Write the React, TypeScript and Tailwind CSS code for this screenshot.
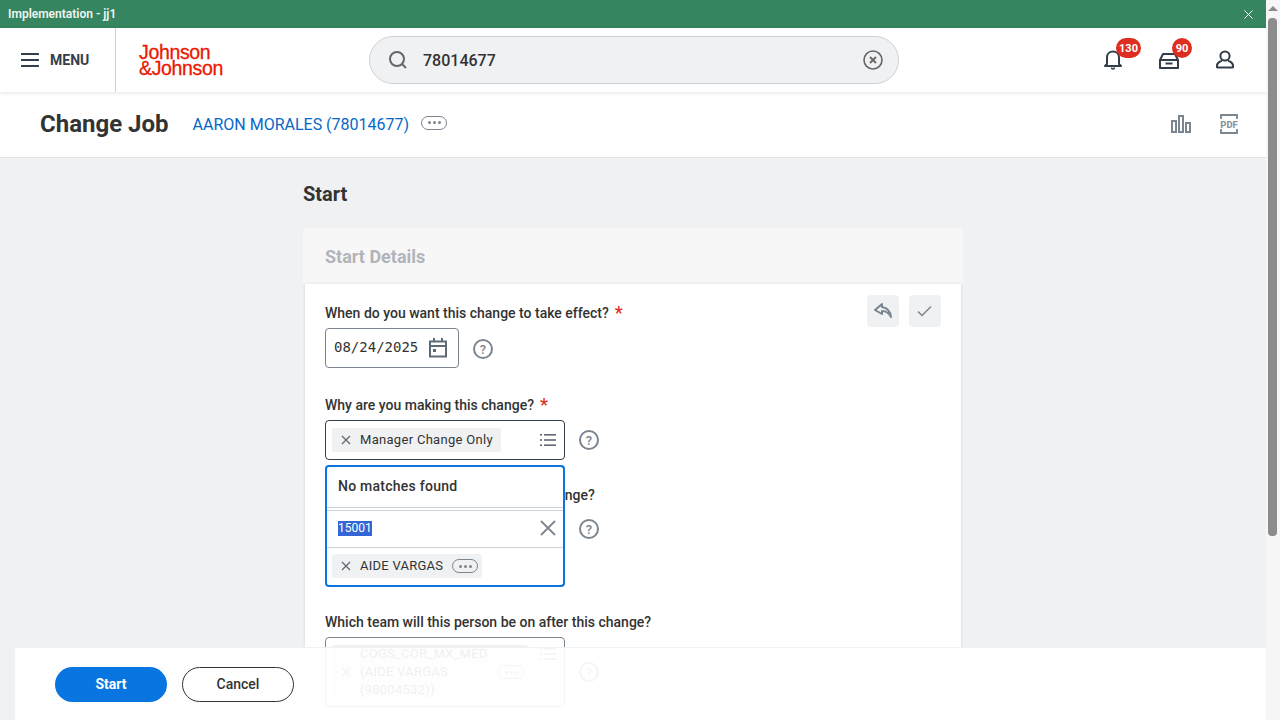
import type { ReactNode } from 'react';

function MoreChip() {
  return (
    <span className="inline-flex h-[14px] w-[26px] shrink-0 items-center justify-center gap-[2px] rounded-full border border-[#7b858f]">
      <i className="h-[3px] w-[3px] rounded-full bg-[#7b858f]" />
      <i className="h-[3px] w-[3px] rounded-full bg-[#7b858f]" />
      <i className="h-[3px] w-[3px] rounded-full bg-[#7b858f]" />
    </span>
  );
}

function HelpIcon({ className = '' }: { className?: string }) {
  return (
    <span className={`flex h-5 w-5 shrink-0 items-center justify-center rounded-full border-2 border-[#7b858f] text-[13px] font-medium leading-none text-[#7b858f] ${className}`}>?</span>
  );
}

function SmallX() {
  return (
    <svg width="10" height="10" viewBox="0 0 10 10" className="shrink-0" fill="none" stroke="#5e6a75" strokeWidth="1.3">
      <path d="M1 1l8 8M9 1l-8 8" />
    </svg>
  );
}

function ListIcon({ className = '' }: { className?: string }) {
  return (
    <svg width="16" height="14" viewBox="0 0 16 14" fill="#5e6a75" className={`shrink-0 ${className}`}>
      <rect x="0" y="1" width="2" height="1.6" />
      <rect x="4" y="1" width="12" height="1.6" />
      <rect x="0" y="6.2" width="2" height="1.6" />
      <rect x="4" y="6.2" width="12" height="1.6" />
      <rect x="0" y="11.4" width="2" height="1.6" />
      <rect x="4" y="11.4" width="12" height="1.6" />
    </svg>
  );
}

function Label({ children, required }: { children: ReactNode; required?: boolean }) {
  return (
    <div className="mb-[6px] flex h-[18px] items-center text-[14px] font-medium leading-[18px] text-[#333333]">
      <span>{children}</span>
      {required && <span className="ml-[6px] text-[18px] leading-[18px] text-[#de2e21]">*</span>}
    </div>
  );
}

function Badge({ children, className }: { children: ReactNode; className: string }) {
  return (
    <span className={`absolute flex h-5 items-center justify-center rounded-full bg-[#de2e21] text-[11px] font-bold leading-none text-white ${className}`}>{children}</span>
  );
}

export default function App() {
  return (
    <div className="flex h-screen overflow-hidden bg-white font-['Roboto',sans-serif]">
      <div className="relative flex h-full w-[1266px] shrink-0 flex-col overflow-hidden bg-[#f0f1f2]">
        {/* tenant bar */}
        <div className="flex h-[28px] shrink-0 items-center justify-between bg-[#348560] pl-2 pr-[13px] text-[12px] font-semibold text-[#f0f5f2]">
          <span>Implementation - jj1</span>
          <svg width="9" height="9" viewBox="0 0 9 9" fill="none" stroke="#fff" strokeWidth="1">
            <path d="M.5.5l8 8M8.5.5l-8 8" />
          </svg>
        </div>

        {/* top nav */}
        <div className="z-10 flex h-[64px] shrink-0 items-center bg-white shadow-[0_1px_4px_rgba(0,0,0,0.12)]">
          <div className="flex h-full w-[116px] shrink-0 items-center border-r border-[#ced3d9] pl-[21px]">
            <svg width="18" height="14" viewBox="0 0 18 14" fill="#333e4b">
              <rect y="0" width="18" height="2" rx="0.5" />
              <rect y="6" width="18" height="2" rx="0.5" />
              <rect y="12" width="18" height="2" rx="0.5" />
            </svg>
            <span className="ml-[11px] text-[14px] font-bold text-[#333e4b]">MENU</span>
          </div>
          <div className="ml-[23px] flex w-[100px] flex-col font-['Liberation_Sans',sans-serif] text-[19.5px] leading-[16px] tracking-[-0.35px] text-[#eb1700] [-webkit-text-stroke:0.3px_#eb1700]">
            <span>Johnson</span>
            <span>&amp;Johnson</span>
          </div>
          <div className="ml-[130px] flex h-[48px] w-[530px] items-center rounded-full border border-[#ced3d9] bg-[#f0f1f2] pl-[18px] pr-[15px]">
            <svg width="20" height="20" viewBox="0 0 20 20" fill="none" stroke="#666666" strokeWidth="2" className="shrink-0">
              <circle cx="9" cy="9" r="7" />
              <path d="M14 14l4 4" />
            </svg>
            <span className="ml-[15px] flex-1 pt-[2px] text-[16px] font-medium text-[#333333]">78014677</span>
            <svg width="20" height="20" viewBox="0 0 20 20" fill="none" stroke="#666666" className="shrink-0">
              <circle cx="10" cy="10" r="9" strokeWidth="1.6" />
              <path d="M7 7l6 6M13 7l-6 6" strokeWidth="1.8" />
            </svg>
          </div>
          <div className="relative ml-[204px] h-[24px] w-[24px]">
            <svg width="18" height="21" viewBox="0 0 18 21" fill="none" stroke="#333e4b" strokeWidth="2" className="absolute left-[1px] top-[1px]">
              <path d="M3 15V8.5C3 5 5.5 2.5 9 2.5s6 2.5 6 6V15l2 2H1z" strokeLinejoin="round" />
              <path d="M7.5 18.5c0 2 3 2 3 0" strokeWidth="1.6" />
            </svg>
            <Badge className="left-[13px] top-[-10px] w-[25px]">130</Badge>
          </div>
          <div className="relative ml-[31px] h-[24px] w-[24px]">
            <svg width="20" height="17" viewBox="0 0 20 17" fill="none" stroke="#333e4b" strokeWidth="2" className="absolute left-[1px] top-[4px]">
              <path d="M1 8L4 2h12l3 6v8H1z" strokeLinejoin="round" />
              <path d="M1 8h18M6.5 11.5h7" />
            </svg>
            <Badge className="left-[14px] top-[-10px] w-5">90</Badge>
          </div>
          <div className="relative ml-[31px] h-[24px] w-[24px]">
            <svg width="18" height="19" viewBox="0 0 18 19" fill="none" stroke="#333e4b" strokeWidth="2" className="absolute left-[3px] top-[2px]">
              <circle cx="9" cy="6" r="4.6" />
              <path d="M1 18v-2c0-3 3-5 5-5M17 18v-2c0-3-3-5-5-5M1 17.5h16" />
            </svg>
          </div>
        </div>

        {/* page title */}
        <div className="flex h-[66px] shrink-0 items-center border-b border-[#e1e4e7] bg-white pl-[40px] pr-[27px]">
          <h1 className="mb-[2px] text-[24px] font-bold text-[#333333]">Change Job</h1>
          <span className="ml-[24px] text-[16px] text-[#0568c9]">AARON MORALES (78014677)</span>
          <span className="mb-[4px] ml-[12px] flex">
            <MoreChip />
          </span>
          <div className="mb-[2px] ml-auto flex items-center gap-[28px]">
            <svg width="20" height="18" viewBox="0 0 20 18" fill="none" stroke="#7b858f" strokeWidth="2">
              <rect x="1" y="6" width="4" height="11" />
              <rect x="8" y="1" width="4" height="16" />
              <rect x="15" y="8" width="4" height="9" />
            </svg>
            <svg width="20" height="20" viewBox="0 0 20 20" fill="none">
              <path d="M2 5V1h16v4M2 15v4h16v-4" stroke="#7b858f" strokeWidth="1.8" />
              <text x="10" y="13.5" textAnchor="middle" fontSize="9.5" fontWeight="800" fill="#8b949c" fontFamily="Roboto, sans-serif">PDF</text>
            </svg>
          </div>
        </div>

        {/* form */}
        <div className="ml-[303px] w-[660px]">
          <h2 className="mt-[24px] h-[24px] text-[20px] font-bold leading-[24px] text-[#333333]">Start</h2>
          <div className="mt-[22px] flex h-[56px] items-center rounded-t-[4px] bg-[#f7f7f8] pl-[22px] text-[18px] font-bold text-[#b1b4b8]">Start Details</div>
          <div className="relative mx-[2px] h-[600px] bg-white px-[20px] pt-[20px] shadow-[0_0_3px_rgba(0,0,0,0.12)]">
            <div className="absolute right-[20px] top-[11px] flex gap-[10px]">
              <span className="flex h-8 w-8 items-center justify-center rounded-[4px] bg-[#f0f1f2]">
                <svg width="18" height="16" viewBox="0 0 18 16" fill="none" stroke="#7b858f" strokeWidth="2" strokeLinejoin="round">
                  <path d="M8 1L1 7l7 4V8c4 0 7 2 9 6-.5-5-3-9-9-10z" />
                </svg>
              </span>
              <span className="flex h-8 w-8 items-center justify-center rounded-[4px] bg-[#f0f1f2] pr-[2px]">
                <svg width="15" height="12" viewBox="0 0 15 12" fill="none" stroke="#7b858f" strokeWidth="1.5">
                  <path d="M1 6.5l4 4 9-9" />
                </svg>
              </span>
            </div>

            <Label required>When do you want this change to take effect?</Label>
            <div className="flex items-center">
              <div className="flex h-[40px] w-[134px] items-center rounded-[4px] border border-[#7b858f] pl-[8px] pr-[11px]">
                <span className="flex-1 pb-[2px] font-['DejaVu_Sans_Mono',monospace] text-[14px] text-[#333333]">08/24/2025</span>
                <svg width="18" height="20" viewBox="0 0 18 20" fill="none" stroke="#5e6a75" strokeWidth="2" className="shrink-0">
                  <rect x="1" y="3.5" width="16" height="15" />
                  <path d="M1 8h16M5 0v4M13 0v4" />
                  <rect x="4" y="11" width="3" height="3" fill="#5e6a75" stroke="none" />
                </svg>
              </div>
              <HelpIcon className="ml-[14px] mt-[2px]" />
            </div>

            <div className="mt-[28px]">
              <Label required>Why are you making this change?</Label>
              <div className="flex items-center">
                <div className="flex h-[40px] w-[240px] items-center justify-between rounded-[4px] border border-[#333e4b] pl-[6px] pr-[8px]">
                  <span className="flex h-6 items-center gap-[9px] rounded-[3px] bg-[#f0f1f2] pl-[9px] pr-2 text-[13px] tracking-[0.3px] text-[#333333]">
                    <SmallX />
                    Manager Change Only
                  </span>
                  <ListIcon />
                </div>
                <HelpIcon className="ml-[14px]" />
              </div>
            </div>

            <div className="mt-[26px]">
              <Label>Who will be the manager after this change?</Label>
              <div className="flex items-start">
                {/* focused prompt, with its result list opening upwards */}
                <div className="relative h-[77px] w-[240px] rounded-b-[4px] border-2 border-t-0 border-[#0875e1] bg-white">
                  <div className="absolute bottom-full left-[-2px] right-[-2px] flex h-[45px] items-center rounded-t-[4px] border-2 border-b-0 border-[#0875e1] bg-white pb-[5px] pl-[11px] text-[14px] font-medium tracking-[0.25px] text-[#333333]">
                    No matches found
                    <span className="absolute bottom-[2px] left-0 right-0 h-px bg-[#ced3d9]" />
                  </div>
                  <div className="flex h-[38px] items-center justify-between border-y border-[#ced3d9] pb-[2px] pl-[11px] pr-[7px]">
                    <span className="bg-[#3367d6] text-[12px] leading-[15px] text-white">15001</span>
                    <svg width="16" height="16" viewBox="0 0 16 16" fill="none" stroke="#7b858f" strokeWidth="1.8">
                      <path d="M1 1l14 14M15 1L1 15" />
                    </svg>
                  </div>
                  <div className="pl-[5px] pt-[6px]">
                    <span className="inline-flex h-6 items-center gap-[9px] rounded-[3px] bg-[#f0f1f2] pl-[9px] pr-[4px] text-[13px] tracking-[0.25px] text-[#333333]">
                      <SmallX />
                      AIDE VARGAS
                      <MoreChip />
                    </span>
                  </div>
                </div>
                <HelpIcon className="ml-[14px] mt-[9px]" />
              </div>
            </div>

            <div className="mt-[26px]">
              <Label>Which team will this person be on after this change?</Label>
              <div className="flex items-center">
                <div className="flex h-[70px] w-[240px] items-start justify-between rounded-[4px] border border-[#7b858f] pl-[6px] pr-[8px] pt-[7px]">
                  <span className="flex h-[54px] w-[196px] items-center gap-[9px] rounded-[3px] bg-[#f0f1f2] pl-[9px] pr-[4px] text-[13px] leading-[18px] tracking-[0.25px] text-[#333333]">
                    <SmallX />
                    <span className="w-[130px]">COGS_COR_MX_MED (AIDE VARGAS (98004532))</span>
                    <MoreChip />
                  </span>
                  <ListIcon className="mt-[2px]" />
                </div>
                <HelpIcon className="ml-[14px]" />
              </div>
            </div>
          </div>
        </div>

        {/* sticky action bar */}
        <div className="absolute bottom-0 left-[15px] right-0 z-20 flex h-[73px] items-start gap-[15px] border-t border-[#f0f1f2] bg-white/[0.92] pl-[40px] pt-[19px]">
          <button className="h-[35px] w-[112px] rounded-full bg-[#0875e1] text-[14px] font-bold text-white">Start</button>
          <button className="h-[35px] w-[112px] rounded-full border border-[#333333] bg-white text-[14px] font-medium text-[#333333]">Cancel</button>
        </div>
      </div>

      {/* page scrollbar */}
      <div className="flex h-full w-[14px] shrink-0 flex-col items-center bg-[#f6f6f6] pr-[1px] pt-[6px]">
        <span className="h-0 w-0 border-x-[5px] border-b-[5px] border-x-transparent border-b-[#8c8c8c]" />
        <span className="mt-[7px] h-[518px] w-[9px] rounded-[4px] bg-[#8c8c8c]" />
      </div>
    </div>
  );
}
